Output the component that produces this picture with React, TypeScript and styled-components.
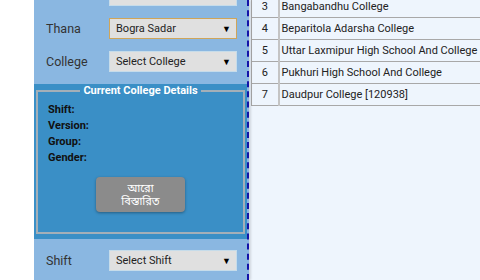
import styled, { createGlobalStyle } from 'styled-components';

const colleges = [
  { sl: 3, name: 'Bangabandhu College' },
  { sl: 4, name: 'Beparitola Adarsha College' },
  { sl: 5, name: 'Uttar Laxmipur High School And College' },
  { sl: 6, name: 'Pukhuri High School And College' },
  { sl: 7, name: 'Daudpur College [120938]' },
];

const detailLabels = ['Shift:', 'Version:', 'Group:', 'Gender:'];

export default function App() {
  return (
    <>
      <GlobalStyle />
      <Page>
        <Gutter />
        <SidePanel>
          <SideContent>
            {/* row scrolled above the top edge: only the bottom of its box shows */}
            <FormRow>
              <Label />
              <SelectBox />
            </FormRow>
            <FormRow>
              <Label>Thana</Label>
              <SelectBox $active>
                <span>Bogra Sadar</span>
                <Arrow>▼</Arrow>
              </SelectBox>
            </FormRow>
            <FormRow>
              <Label>College</Label>
              <SelectBox>
                <span>Select College</span>
                <Arrow>▼</Arrow>
              </SelectBox>
            </FormRow>

            <Details>
              <DetailsFieldset>
                <Legend>Current College Details</Legend>
                {detailLabels.map((l) => (
                  <DetailLine key={l}>{l}</DetailLine>
                ))}
                <MoreButton>
                  আরো
                  <br />
                  বিস্তারিত
                </MoreButton>
              </DetailsFieldset>
            </Details>

            <FormRow>
              <Label>Shift</Label>
              <SelectBox>
                <span>Select Shift</span>
                <Arrow>▼</Arrow>
              </SelectBox>
            </FormRow>
          </SideContent>
        </SidePanel>

        <Main>
          <CollegeTable>
            <tbody>
              {colleges.map((c) => (
                <tr key={c.sl}>
                  <NumCell>{c.sl}</NumCell>
                  <NameCell>{c.name}</NameCell>
                </tr>
              ))}
            </tbody>
          </CollegeTable>
        </Main>
      </Page>
    </>
  );
}

const GlobalStyle = createGlobalStyle`
  html, body {
    margin: 0;
    padding: 0;
    background: #fff;
    font-family: Roboto, "Liberation Sans", sans-serif;
    overflow: hidden;
  }
`;

const Page = styled.div`
  display: flex;
  width: 480px;
  height: 280px;
  overflow: hidden;
`;

const Gutter = styled.div`
  width: 34px;
  flex-shrink: 0;
  background: #fff;
`;

const SidePanel = styled.aside`
  width: 213px;
  flex-shrink: 0;
  background: #8ab7e1;
  border-right: 2px dashed #1414a8;
  box-shadow: 2px 0 2px rgba(0, 0, 0, 0.12);
  overflow: hidden;
  position: relative;
  z-index: 1;
`;

const SideContent = styled.div`
  margin-top: -21px;
  display: flex;
  flex-direction: column;
`;

const FormRow = styled.div`
  display: flex;
  align-items: center;
  height: 33px;
  padding: 0 10px 0 12px;
`;

const Label = styled.label`
  width: 63px;
  font-size: 12.5px;
  color: #333;
`;

const SelectBox = styled.div<{ $active?: boolean }>`
  box-sizing: border-box;
  width: 128px;
  height: 21px;
  display: flex;
  align-items: center;
  justify-content: space-between;
  padding: 0 5px 0 6px;
  background: #e0e0e0;
  border: 1px solid ${(p) => (p.$active ? '#cfa55a' : '#c6dcea')};
  font-size: 11px;
  color: #222;
`;

const Arrow = styled.span`
  font-size: 9px;
  color: #000;
`;

const Details = styled.section`
  margin: 6px 0 5px;
  padding: 0 2px 5px;
  background: #3a8fc6;
`;

const DetailsFieldset = styled.fieldset`
  margin: 0;
  padding: 4px 10px 20px;
  border: 2px solid #a3afb8;
  min-width: 0;
`;

const Legend = styled.legend`
  margin: 0 auto;
  padding: 0 3px;
  color: #fff;
  font-weight: 700;
  font-size: 11px;
  line-height: 14px;
`;

const DetailLine = styled.div`
  font-size: 11px;
  font-weight: 700;
  line-height: 16px;
  color: #111;
`;

const MoreButton = styled.button`
  display: block;
  margin: 11px auto 0;
  width: 89px;
  height: 35px;
  padding: 3px 0 0;
  border: none;
  border-radius: 4px;
  background: #8b8b8b;
  box-shadow: 0 1px 3px rgba(0, 0, 0, 0.35);
  color: #fff;
  font-family: "Noto Sans Bengali", "Lohit Bengali", "Noto Sans", sans-serif;
  font-size: 11px;
  line-height: 13px;
  text-align: center;
`;

const Main = styled.main`
  flex: 1;
  background: #eef5fd;
  padding-left: 2px;
  overflow: hidden;
`;

const CollegeTable = styled.table`
  margin-top: -5px;
  width: 260px;
  border-collapse: collapse;
  font-size: 11px;
  color: #222;
`;

const NumCell = styled.td`
  box-sizing: border-box;
  width: 27px;
  height: 21px;
  padding: 0;
  text-align: center;
  border: 1px solid #a8a8a8;
  border-right: 2px solid #c4c4c4;
`;

const NameCell = styled.td`
  height: 21px;
  padding: 0 2px;
  white-space: nowrap;
  border: 1px solid #a8a8a8;
`;
